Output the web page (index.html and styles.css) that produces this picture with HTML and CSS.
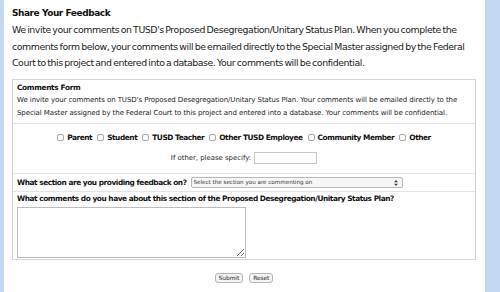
FILE: index.html
```html
<!DOCTYPE html>
<html>
	<head>
		<meta charset="UTF-8">
		<title>Share Your Feedback</title>
		<link rel="stylesheet" href="styles.css">
	</head>
	<body>
		<div id="page">
			<div id="content">
				<h2>Share Your Feedback</h2>
				<p class="intro">We invite your comments on TUSD's Proposed Desegregation/Unitary Status Plan. When you complete the comments form below, your comments will be emailed directly to the Special Master assigned by the Federal Court to this project and entered into a database. Your comments will be confidential.</p>
				<form id="feedback">
					<div class="box">
						<div class="row head">
							<h3>Comments Form</h3>
							<p>We invite your comments on TUSD's Proposed Desegregation/Unitary Status Plan. Your comments will be emailed directly to the Special Master assigned by the Federal Court to this project and entered into a database. Your comments will be confidential.</p>
						</div>
						<div class="row who">
							<div class="checks">
								<label><input type="checkbox"> Parent</label>
								<label><input type="checkbox"> Student</label>
								<label><input type="checkbox"> TUSD Teacher</label>
								<label><input type="checkbox"> Other TUSD Employee</label>
								<label><input type="checkbox"> Community Member</label>
								<label><input type="checkbox"> Other</label>
							</div>
							<div class="other">If other, please specify: <input type="text" class="txt"></div>
						</div>
						<div class="row section">
							<span class="lbl">What section are you providing feedback on?</span>
							<span class="selwrap">
								<select class="sel"><option>Select the section you are commenting on</option></select>
								<svg class="arrows" width="4" height="6" viewBox="0 0 4 6"><path d="M0 2.2 L2 0 L4 2.2 Z M0 3.8 L2 6 L4 3.8 Z" fill="#444"/></svg>
							</span>
						</div>
						<div class="row comments">
							<div class="lbl">What comments do you have about this section of the Proposed Desegregation/Unitary Status Plan?</div>
							<textarea></textarea>
						</div>
					</div>
					<div class="buttons">
						<button type="button">Submit</button>
						<button type="button">Reset</button>
					</div>
				</form>
			</div>
		</div>
	</body>
</html>
```

FILE: styles.css
```css
*{margin: 0;padding: 0;box-sizing: border-box;}
html,body{height: 100%;}
body{background: #c2d9f1;font-family: "DejaVu Sans", Verdana, sans-serif;color: #111;}
#page{margin-left: 4px;width: 481px;height: 100%;background: #fff;}
#content{padding: 7px 9px 0 8px;}
h2{font-size: 9px;letter-spacing: -0.45px;font-weight: bold;line-height: 12px;}
.intro{font-size: 9.4px;letter-spacing: -0.43px;word-spacing: -1px;line-height: 16.5px;margin-top: 3px;color: #222;}
.box{border: 1px solid #d4d4d4;margin-top: 7px;}
.row{border-top: 1px solid #e3e3e3;padding: 0 4px;}
.row:first-child{border-top: none;}
.head{padding-top: 2px;padding-bottom: 2px;}
h3{font-size: 7.4px;letter-spacing: -0.35px;font-weight: bold;line-height: 11px;}
.head p{font-size: 7px;letter-spacing: -0.08px;line-height: 13.5px;margin-top: 1px;color: #222;}
.who{padding-top: 9px;padding-bottom: 9px;}
.checks{display: flex;justify-content: center;gap: 5px;font-size: 7.4px;letter-spacing: -0.45px;font-weight: bold;line-height: 10px;}
.checks label{display: flex;align-items: center;gap: 3px;}
.checks input{appearance: none;width: 7px;height: 7px;margin: 0;border: 1px solid #a9a9a9;border-radius: 2px;background: #fafafa;}
.other{font-size: 6.9px;margin-top: 9px;display: flex;justify-content: center;align-items: center;gap: 3px;color: #222;}
.txt{width: 63px;height: 12px;border: 1px solid #c8c8c8;}
.section{display: flex;align-items: center;gap: 4px;padding-top: 3px;padding-bottom: 2px;}
.lbl{font-size: 7.4px;letter-spacing: -0.45px;font-weight: bold;line-height: 12px;}
.selwrap{position: relative;display: block;}
.sel{appearance: none;display: block;width: 212px;height: 11px;font-size: 5.6px;font-family: "DejaVu Sans", sans-serif;color: #333;border: 1px solid #b9b9b9;border-radius: 2px;background: #f6f6f6;padding: 0 2px;line-height: 9px;}
.arrows{position: absolute;right: 5px;top: 3px;}
.comments{padding-top: 1px;padding-bottom: 1px;}
textarea{display: block;width: 229px;height: 51px;border: 1px solid #bdbdbd;margin-top: 2px;resize: both;}
.buttons{display: flex;justify-content: center;gap: 6px;margin-top: 13px;}
.buttons button{font-size: 5.8px;font-family: "DejaVu Sans", sans-serif;color: #222;padding: 0 3px;height: 10px;line-height: 8px;border: 1px solid #b5b5b5;border-radius: 3px;background: #f4f4f4;}
```
